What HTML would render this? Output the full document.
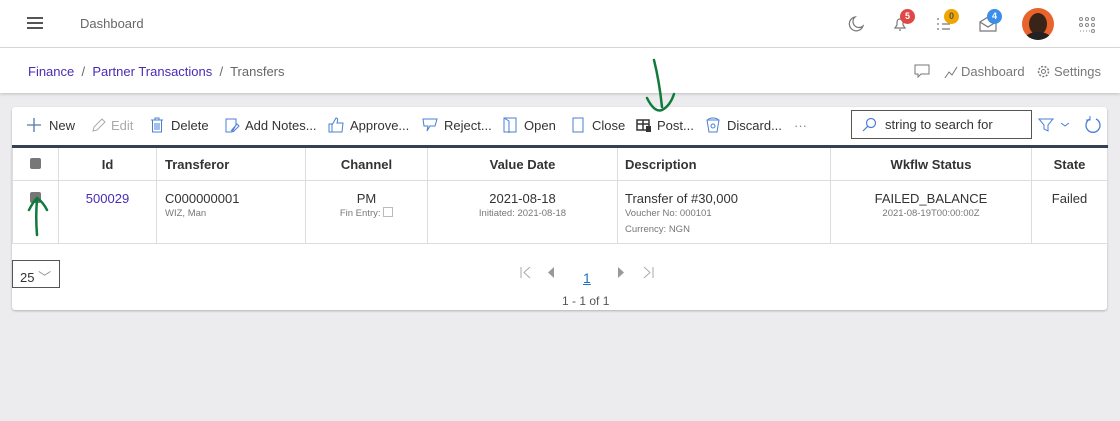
<!DOCTYPE html>
<html><head><style>
*{box-sizing:border-box;margin:0;padding:0}
body{width:1120px;height:421px;background:#ececee;font-family:"Liberation Sans",sans-serif;position:relative;overflow:hidden;color:#333}
.hdr{position:absolute;left:0;top:0;width:1120px;height:48px;background:#fff;border-bottom:1px solid #ddd}
.bc{position:absolute;left:0;top:48px;width:1120px;height:45px;background:#fff;box-shadow:0 1px 3px rgba(0,0,0,.2)}
.abs{position:absolute}
.card{position:absolute;left:12px;top:107px;width:1095px;height:203px;background:#fff;border-radius:3px;box-shadow:0 1px 2px rgba(0,0,0,.25)}
.tb{position:absolute;top:118px;font-size:13px;color:#333;white-space:nowrap}
.ic{position:absolute;top:117px}
table{position:absolute;left:12px;top:145px;border-collapse:collapse;border-top:3px solid #354052;font-size:13px;table-layout:fixed}
td,th{border:1px solid #ddd;vertical-align:top}
th{font-weight:bold;color:#333;font-size:13px;vertical-align:middle}
.s{font-size:9.5px;color:#777;line-height:16px}
.badge{position:absolute;width:15px;height:15px;border-radius:50%;color:#fff;font-size:9px;font-weight:bold;text-align:center;line-height:15px}
.cb{display:inline-block;width:11px;height:11px;background:#777;border-radius:2px}
</style></head><body>
<div class="hdr">
 <div class="abs" style="left:27px;top:17px;width:16px;height:2px;background:#555;box-shadow:0 5px 0 #555,0 10px 0 #555"></div>
 <div class="abs" style="left:80px;top:16px;font-size:13px;color:#666">Dashboard</div>
 <svg class="abs" style="left:846px;top:14px" width="20" height="20" viewBox="0 0 20 20"><path d="M9 3a7 7 0 1 0 8 9 6 6 0 0 1-8-9z" fill="none" stroke="#777" stroke-width="1.2"/></svg>
 <svg class="abs" style="left:890px;top:14px" width="20" height="20"><path d="M5 14h10l-2-3V8a3 3 0 0 0-6 0v3zM9 16h2" fill="none" stroke="#777" stroke-width="1.2"/></svg>
 <div class="badge" style="left:900px;top:9px;background:#e04848">5</div>
 <svg class="abs" style="left:935px;top:14px" width="20" height="20"><path d="M2 5h2M2 10h2M2 15h2M7 10h8M7 15h8" stroke="#777" stroke-width="1.3"/></svg>
 <div class="badge" style="left:944px;top:9px;background:#f0a500;color:#555">0</div>
 <svg class="abs" style="left:978px;top:15px" width="20" height="18"><path d="M2 7l8-5 8 5v9H2zM2 7l8 5 8-5" fill="none" stroke="#777" stroke-width="1.2"/></svg>
 <div class="badge" style="left:987px;top:9px;background:#3d8ee8">4</div>
 <div class="abs" style="left:1022px;top:8px;width:32px;height:32px;border-radius:50%;background:#e8642c;overflow:hidden"><div style="position:absolute;left:7px;top:5px;width:18px;height:22px;border-radius:50%;background:#3a2418"></div><div style="position:absolute;left:3px;top:24px;width:26px;height:14px;border-radius:50%;background:#222"></div></div>
 <svg class="abs" style="left:1078px;top:16px" width="18" height="18"><g fill="none" stroke="#888"><circle cx="3" cy="3" r="1.5"/><circle cx="9" cy="3" r="1.5"/><circle cx="15" cy="3" r="1.5"/><circle cx="3" cy="9" r="1.5"/><circle cx="9" cy="9" r="1.5"/><circle cx="15" cy="9" r="1.5"/><circle cx="15" cy="15" r="1.5"/></g><path d="M2 15h10" stroke="#888" stroke-dasharray="1 2"/></svg>
</div>
<div class="bc">
 <div class="abs" style="left:28px;top:16px;font-size:13px;color:#666"><span style="color:#4b2bb5">Finance</span> &nbsp;/&nbsp; <span style="color:#4b2bb5">Partner Transactions</span> &nbsp;/&nbsp; Transfers</div>
 <svg class="abs" style="left:914px;top:16px" width="16" height="14"><path d="M1 1h14v9H7l-3 3v-3H1z" fill="none" stroke="#777"/></svg>
 <svg class="abs" style="left:943px;top:16px" width="16" height="16"><path d="M2 14l4-6 3 3 5-8" fill="none" stroke="#777"/></svg>
 <div class="abs" style="left:961px;top:16px;font-size:13px;color:#777">Dashboard</div>
 <svg class="abs" style="left:1036px;top:16px" width="15" height="15"><circle cx="7.5" cy="7.5" r="5" fill="none" stroke="#777" stroke-width="1.5" stroke-dasharray="2 1.5"/><circle cx="7.5" cy="7.5" r="2" fill="none" stroke="#777"/></svg>
 <div class="abs" style="left:1054px;top:16px;font-size:13px;color:#777">Settings</div>
</div>
<div class="card"></div>
<svg class="ic" style="left:26px" width="16" height="16"><path d="M8 1v14M1 8h14" stroke="#5577aa" stroke-width="1.3"/></svg><div class="tb" style="left:49px">New</div>
<svg class="ic" style="left:90px" width="16" height="16"><path d="M3 14l1-4 8-8 3 3-8 8z" fill="none" stroke="#aaa"/></svg><div class="tb" style="left:111px;color:#aaa">Edit</div>
<svg class="ic" style="left:150px" width="14" height="16"><path d="M1 3h12M5 3V1h4v2M2.5 3v12h9V3M5 6v7M7 6v7M9 6v7" fill="none" stroke="#4a7fd4"/></svg><div class="tb" style="left:171px">Delete</div>
<svg class="ic" style="left:224px" width="16" height="16"><path d="M2 2h10v6l-4 7H2zM7 14l6-7 2 2-6 6" fill="none" stroke="#4a7fd4"/></svg><div class="tb" style="left:245px">Add Notes...</div>
<svg class="ic" style="left:328px" width="17" height="16"><path d="M1 7h3v8H1zM4 8l4-7c2 0 2 2 1 5h6l-1 9H4" fill="none" stroke="#4a7fd4"/></svg><div class="tb" style="left:350px">Approve...</div>
<svg class="ic" style="left:422px" width="17" height="16"><path d="M1 2h14l-2 7H8l-3 5 1-5H2z" fill="none" stroke="#4a7fd4"/></svg><div class="tb" style="left:444px">Reject...</div>
<svg class="ic" style="left:503px" width="14" height="16"><path d="M1 1h12v14H1zM1 1l5 3v12" fill="none" stroke="#4a7fd4"/></svg><div class="tb" style="left:524px">Open</div>
<svg class="ic" style="left:571px" width="14" height="16"><path d="M2 1h10v14H2z" fill="none" stroke="#4a7fd4"/></svg><div class="tb" style="left:592px">Close</div>
<svg class="ic" style="left:636px" width="16" height="16"><path d="M1 3h12v10H1zM1 7h12M7 3v10" fill="none" stroke="#333" stroke-width="1.5"/><rect x="10" y="9" width="5" height="6" fill="#333"/></svg><div class="tb" style="left:657px">Post...</div>
<svg class="ic" style="left:706px" width="14" height="16"><path d="M1 3h12l-2 12H3zM2 3a5 2 0 0 1 10 0" fill="none" stroke="#4a7fd4"/><circle cx="7" cy="9" r="2" fill="none" stroke="#4a7fd4"/></svg><div class="tb" style="left:727px">Discard...</div>
<div class="tb" style="left:794px;color:#888">···</div>
<div class="abs" style="left:851px;top:110px;width:181px;height:29px;border:1px solid #555;font-size:13px;color:#333;padding:6px 0 0 33px">string to search for</div>
<svg class="abs" style="left:861px;top:117px" width="16" height="16"><circle cx="10" cy="6" r="4.5" fill="none" stroke="#4a7fd4" stroke-width="1.2"/><path d="M7 9l-5 5" stroke="#4a7fd4" stroke-width="1.2"/></svg>
<svg class="abs" style="left:1038px;top:117px" width="34" height="16"><path d="M1 2h14l-5 6v6l-4-2V8z" fill="none" stroke="#4a7fd4"/><path d="M23 6l4 3 4-3" fill="none" stroke="#4a7fd4"/></svg>
<svg class="abs" style="left:1083px;top:115px" width="20" height="20"><path d="M7 4a7 7 0 1 0 6 0" fill="none" stroke="#4a7fd4" stroke-width="1.3"/><path d="M7 1v4H3" fill="none" stroke="#4a7fd4"/></svg>
<table>
<colgroup><col style="width:46px"><col style="width:98px"><col style="width:149px"><col style="width:122px"><col style="width:190px"><col style="width:213px"><col style="width:201px"><col style="width:76px"></colgroup>
<tr style="height:34px"><th><span class="cb"></span></th><th>Id</th><th style="text-align:left;padding-left:8px">Transferor</th><th>Channel</th><th>Value Date</th><th style="text-align:left;padding-left:7px">Description</th><th>Wkflw Status</th><th>State</th></tr>
<tr style="height:63px"><td style="text-align:center;padding-top:10px"><span class="cb"></span></td>
<td style="text-align:center;padding-top:10px;color:#4b2bb5">500029</td>
<td style="padding:10px 0 0 8px">C000000001<div class="s">WIZ, Man</div></td>
<td style="text-align:center;padding-top:10px">PM<div class="s">Fin Entry: <span style="display:inline-block;width:10px;height:10px;border:1px solid #bbb;vertical-align:-1px"></span></div></td>
<td style="text-align:center;padding-top:10px">2021-08-18<div class="s">Initiated: 2021-08-18</div></td>
<td style="padding:10px 0 0 7px">Transfer of #30,000<div class="s">Voucher No: 000101</div><div class="s">Currency: NGN</div></td>
<td style="text-align:center;padding-top:10px">FAILED_BALANCE<div class="s">2021-08-19T00:00:00Z</div></td>
<td style="text-align:center;padding-top:10px">Failed</td></tr>
</table>
<div class="abs" style="left:12px;top:260px;width:48px;height:28px;border:1px solid #555;font-size:13px;padding:6px 0 0 7px">25 <span style="color:#999">﹀</span></div>
<svg class="abs" style="left:518px;top:265px" width="140" height="16"><g fill="#aaa" stroke="#aaa"><path d="M3 2v11M12 2l-6 5.5 6 5.5" fill="none"/><path d="M36 2l-6 5.5 6 5.5z" fill="#999" stroke="none"/><path d="M100 2l6 5.5-6 5.5z" fill="#999" stroke="none"/><path d="M126 2l6 5.5-6 5.5M135 2v11" fill="none"/></g></svg>
<div class="abs" style="left:583px;top:270px;font-size:14px;color:#1a73c8;text-decoration:underline">1</div>
<div class="abs" style="left:562px;top:294px;font-size:12px;color:#555">1 - 1 of 1</div>
<svg class="abs" style="left:0;top:0" width="1120" height="421"><g fill="none" stroke="#0f7a3c" stroke-width="2.5" stroke-linecap="round"><path d="M654 60c3 12 6 28 8 47M647 98c5 10 10 14 15 12 6-3 10-10 12-16"/><path d="M37 235c-1-12-1-24 0-36M29 210c3-6 6-10 8-12 3 2 7 6 10 12"/></g></svg>
</body></html>
